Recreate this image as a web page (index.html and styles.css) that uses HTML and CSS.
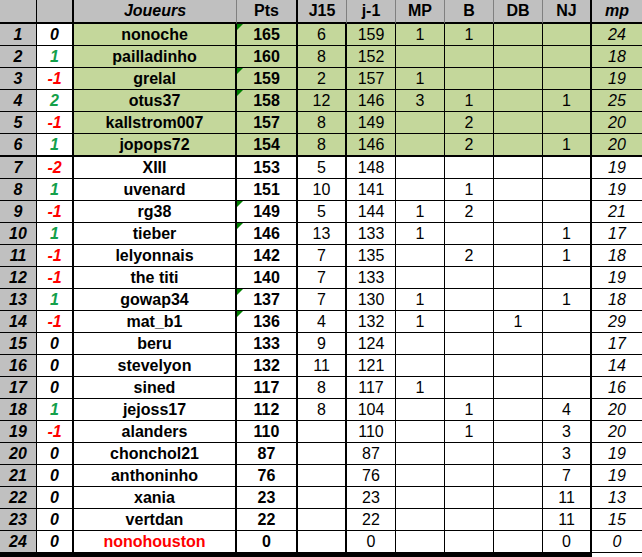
FILE: index.html
```html
<!DOCTYPE html>
<html lang="fr">
<head>
<meta charset="utf-8">
<title>Classement</title>
<link rel="stylesheet" href="styles.css">
</head>
<body>
<div class="sheet">
  <div class="row hd">
    <div class="c rk"></div><div class="c chg"></div><div class="c name it">Joueurs</div><div class="c pts">Pts</div><div class="c j15">J15</div><div class="c">j-1</div><div class="c">MP</div><div class="c">B</div><div class="c">DB</div><div class="c nj">NJ</div><div class="c mp">mp</div>
  </div>
  <div class="row g">
    <div class="c rk">1</div><div class="c chg">0</div><div class="c name">nonoche</div><div class="c pts tri">165</div><div class="c j15">6</div><div class="c">159</div><div class="c">1</div><div class="c">1</div><div class="c"></div><div class="c nj"></div><div class="c mp">24</div>
  </div>
  <div class="row g">
    <div class="c rk">2</div><div class="c chg up">1</div><div class="c name">pailladinho</div><div class="c pts">160</div><div class="c j15">8</div><div class="c">152</div><div class="c"></div><div class="c"></div><div class="c"></div><div class="c nj"></div><div class="c mp">18</div>
  </div>
  <div class="row g">
    <div class="c rk">3</div><div class="c chg dn">-1</div><div class="c name">grelal</div><div class="c pts tri">159</div><div class="c j15">2</div><div class="c">157</div><div class="c">1</div><div class="c"></div><div class="c"></div><div class="c nj"></div><div class="c mp">19</div>
  </div>
  <div class="row g">
    <div class="c rk">4</div><div class="c chg up">2</div><div class="c name">otus37</div><div class="c pts tri">158</div><div class="c j15">12</div><div class="c">146</div><div class="c">3</div><div class="c">1</div><div class="c"></div><div class="c nj">1</div><div class="c mp">25</div>
  </div>
  <div class="row g">
    <div class="c rk">5</div><div class="c chg dn">-1</div><div class="c name">kallstrom007</div><div class="c pts">157</div><div class="c j15">8</div><div class="c">149</div><div class="c"></div><div class="c">2</div><div class="c"></div><div class="c nj"></div><div class="c mp">20</div>
  </div>
  <div class="row g sep">
    <div class="c rk">6</div><div class="c chg up">1</div><div class="c name">jopops72</div><div class="c pts">154</div><div class="c j15">8</div><div class="c">146</div><div class="c"></div><div class="c">2</div><div class="c"></div><div class="c nj">1</div><div class="c mp">20</div>
  </div>
  <div class="row">
    <div class="c rk">7</div><div class="c chg dn">-2</div><div class="c name">XIII</div><div class="c pts">153</div><div class="c j15">5</div><div class="c">148</div><div class="c"></div><div class="c"></div><div class="c"></div><div class="c nj"></div><div class="c mp">19</div>
  </div>
  <div class="row">
    <div class="c rk">8</div><div class="c chg up">1</div><div class="c name">uvenard</div><div class="c pts">151</div><div class="c j15">10</div><div class="c">141</div><div class="c"></div><div class="c">1</div><div class="c"></div><div class="c nj"></div><div class="c mp">19</div>
  </div>
  <div class="row">
    <div class="c rk">9</div><div class="c chg dn">-1</div><div class="c name">rg38</div><div class="c pts tri">149</div><div class="c j15">5</div><div class="c">144</div><div class="c">1</div><div class="c">2</div><div class="c"></div><div class="c nj"></div><div class="c mp">21</div>
  </div>
  <div class="row">
    <div class="c rk">10</div><div class="c chg up">1</div><div class="c name">tieber</div><div class="c pts tri">146</div><div class="c j15">13</div><div class="c">133</div><div class="c">1</div><div class="c"></div><div class="c"></div><div class="c nj">1</div><div class="c mp">17</div>
  </div>
  <div class="row">
    <div class="c rk">11</div><div class="c chg dn">-1</div><div class="c name">lelyonnais</div><div class="c pts">142</div><div class="c j15">7</div><div class="c">135</div><div class="c"></div><div class="c">2</div><div class="c"></div><div class="c nj">1</div><div class="c mp">18</div>
  </div>
  <div class="row">
    <div class="c rk">12</div><div class="c chg dn">-1</div><div class="c name">the titi</div><div class="c pts">140</div><div class="c j15">7</div><div class="c">133</div><div class="c"></div><div class="c"></div><div class="c"></div><div class="c nj"></div><div class="c mp">19</div>
  </div>
  <div class="row">
    <div class="c rk">13</div><div class="c chg up">1</div><div class="c name">gowap34</div><div class="c pts tri">137</div><div class="c j15">7</div><div class="c">130</div><div class="c">1</div><div class="c"></div><div class="c"></div><div class="c nj">1</div><div class="c mp">18</div>
  </div>
  <div class="row">
    <div class="c rk">14</div><div class="c chg dn">-1</div><div class="c name">mat_b1</div><div class="c pts tri">136</div><div class="c j15">4</div><div class="c">132</div><div class="c">1</div><div class="c"></div><div class="c">1</div><div class="c nj"></div><div class="c mp">29</div>
  </div>
  <div class="row">
    <div class="c rk">15</div><div class="c chg">0</div><div class="c name">beru</div><div class="c pts">133</div><div class="c j15">9</div><div class="c">124</div><div class="c"></div><div class="c"></div><div class="c"></div><div class="c nj"></div><div class="c mp">17</div>
  </div>
  <div class="row">
    <div class="c rk">16</div><div class="c chg">0</div><div class="c name">stevelyon</div><div class="c pts">132</div><div class="c j15">11</div><div class="c">121</div><div class="c"></div><div class="c"></div><div class="c"></div><div class="c nj"></div><div class="c mp">14</div>
  </div>
  <div class="row">
    <div class="c rk">17</div><div class="c chg">0</div><div class="c name">sined</div><div class="c pts">117</div><div class="c j15">8</div><div class="c">117</div><div class="c">1</div><div class="c"></div><div class="c"></div><div class="c nj"></div><div class="c mp">16</div>
  </div>
  <div class="row">
    <div class="c rk">18</div><div class="c chg up">1</div><div class="c name">jejoss17</div><div class="c pts">112</div><div class="c j15">8</div><div class="c">104</div><div class="c"></div><div class="c">1</div><div class="c"></div><div class="c nj">4</div><div class="c mp">20</div>
  </div>
  <div class="row">
    <div class="c rk">19</div><div class="c chg dn">-1</div><div class="c name">alanders</div><div class="c pts">110</div><div class="c j15"></div><div class="c">110</div><div class="c"></div><div class="c">1</div><div class="c"></div><div class="c nj">3</div><div class="c mp">20</div>
  </div>
  <div class="row">
    <div class="c rk">20</div><div class="c chg">0</div><div class="c name">chonchol21</div><div class="c pts">87</div><div class="c j15"></div><div class="c">87</div><div class="c"></div><div class="c"></div><div class="c"></div><div class="c nj">3</div><div class="c mp">19</div>
  </div>
  <div class="row">
    <div class="c rk">21</div><div class="c chg">0</div><div class="c name">anthoninho</div><div class="c pts">76</div><div class="c j15"></div><div class="c">76</div><div class="c"></div><div class="c"></div><div class="c"></div><div class="c nj">7</div><div class="c mp">19</div>
  </div>
  <div class="row">
    <div class="c rk">22</div><div class="c chg">0</div><div class="c name">xania</div><div class="c pts">23</div><div class="c j15"></div><div class="c">23</div><div class="c"></div><div class="c"></div><div class="c"></div><div class="c nj">11</div><div class="c mp">13</div>
  </div>
  <div class="row">
    <div class="c rk">23</div><div class="c chg">0</div><div class="c name">vertdan</div><div class="c pts">22</div><div class="c j15"></div><div class="c">22</div><div class="c"></div><div class="c"></div><div class="c"></div><div class="c nj">11</div><div class="c mp">15</div>
  </div>
  <div class="row last">
    <div class="c rk">24</div><div class="c chg">0</div><div class="c name red">nonohouston</div><div class="c pts">0</div><div class="c j15"></div><div class="c">0</div><div class="c"></div><div class="c"></div><div class="c"></div><div class="c nj">0</div><div class="c mp">0</div>
  </div>
</div>
</body>
</html>
```
FILE: styles.css
```css
html, body {
  margin: 0;
  padding: 0;
  background: #ffffff;
}

.sheet {
  width: 642px;
  font-family: "Liberation Sans", Arial, sans-serif;
  font-size: 16px;
  color: #000;
}

.row {
  display: grid;
  grid-template-columns: 37px 37px 163px 61px 49px 49px 49px 49px 49px 49px 50px;
  height: 22px;
}

.c {
  box-sizing: border-box;
  border-right: 1px solid #000;
  border-bottom: 1px solid #000;
  text-align: center;
  line-height: 21px;
  white-space: nowrap;
  overflow: hidden;
}

.rk {
  background: #c0c0c0;
  font-weight: bold;
  font-style: italic;
}

.chg {
  font-weight: bold;
  font-style: italic;
  border-right-width: 2px;
}

.up { color: #14a04a; }
.dn { color: #ff0000; }
.red { color: #ff0000; }

.name {
  font-weight: bold;
  border-right-width: 2px;
}

.pts {
  font-weight: bold;
  border-right-width: 2px;
  position: relative;
}

.tri::before {
  content: "";
  position: absolute;
  left: 0;
  top: 0;
  border-top: 6px solid #008000;
  border-right: 6px solid transparent;
}

.j15 { border-right-width: 2px; }
.nj { border-right-width: 2px; }

.mp {
  font-style: italic;
  border-right: none;
}

/* header */
.hd {
  height: 24px;
}
.hd .c {
  background: #c0c0c0;
  font-weight: bold;
  border-bottom: 2px solid #000;
  border-right-color: #808080;
  line-height: 22px;
}
.hd .rk { border-right-color: #000; }
.hd .chg { border-right-color: #000; }
.hd .name { border-right-width: 1px; }
.hd .pts { border-right-color: #000; }
.hd .j15 { border-right-width: 1px; }
.hd .nj { border-right-color: #000; }
.hd .it, .hd .mp { font-style: italic; }

/* green top block */
.g .c { background: #c4d79b; }
.g .rk { background: #c0c0c0; }
.g .chg { background: #ffffff; }

.sep { height: 23px; }
.sep .c { border-bottom-width: 2px; }

.last { height: 26px; }
.last .c { border-bottom: 5px solid #000; }
.last .mp {
  border-bottom: none;
  line-height: 21px;
}
.last .mp::after {
  content: "";
  display: block;
  border-top: 1px solid #000;
}
```
